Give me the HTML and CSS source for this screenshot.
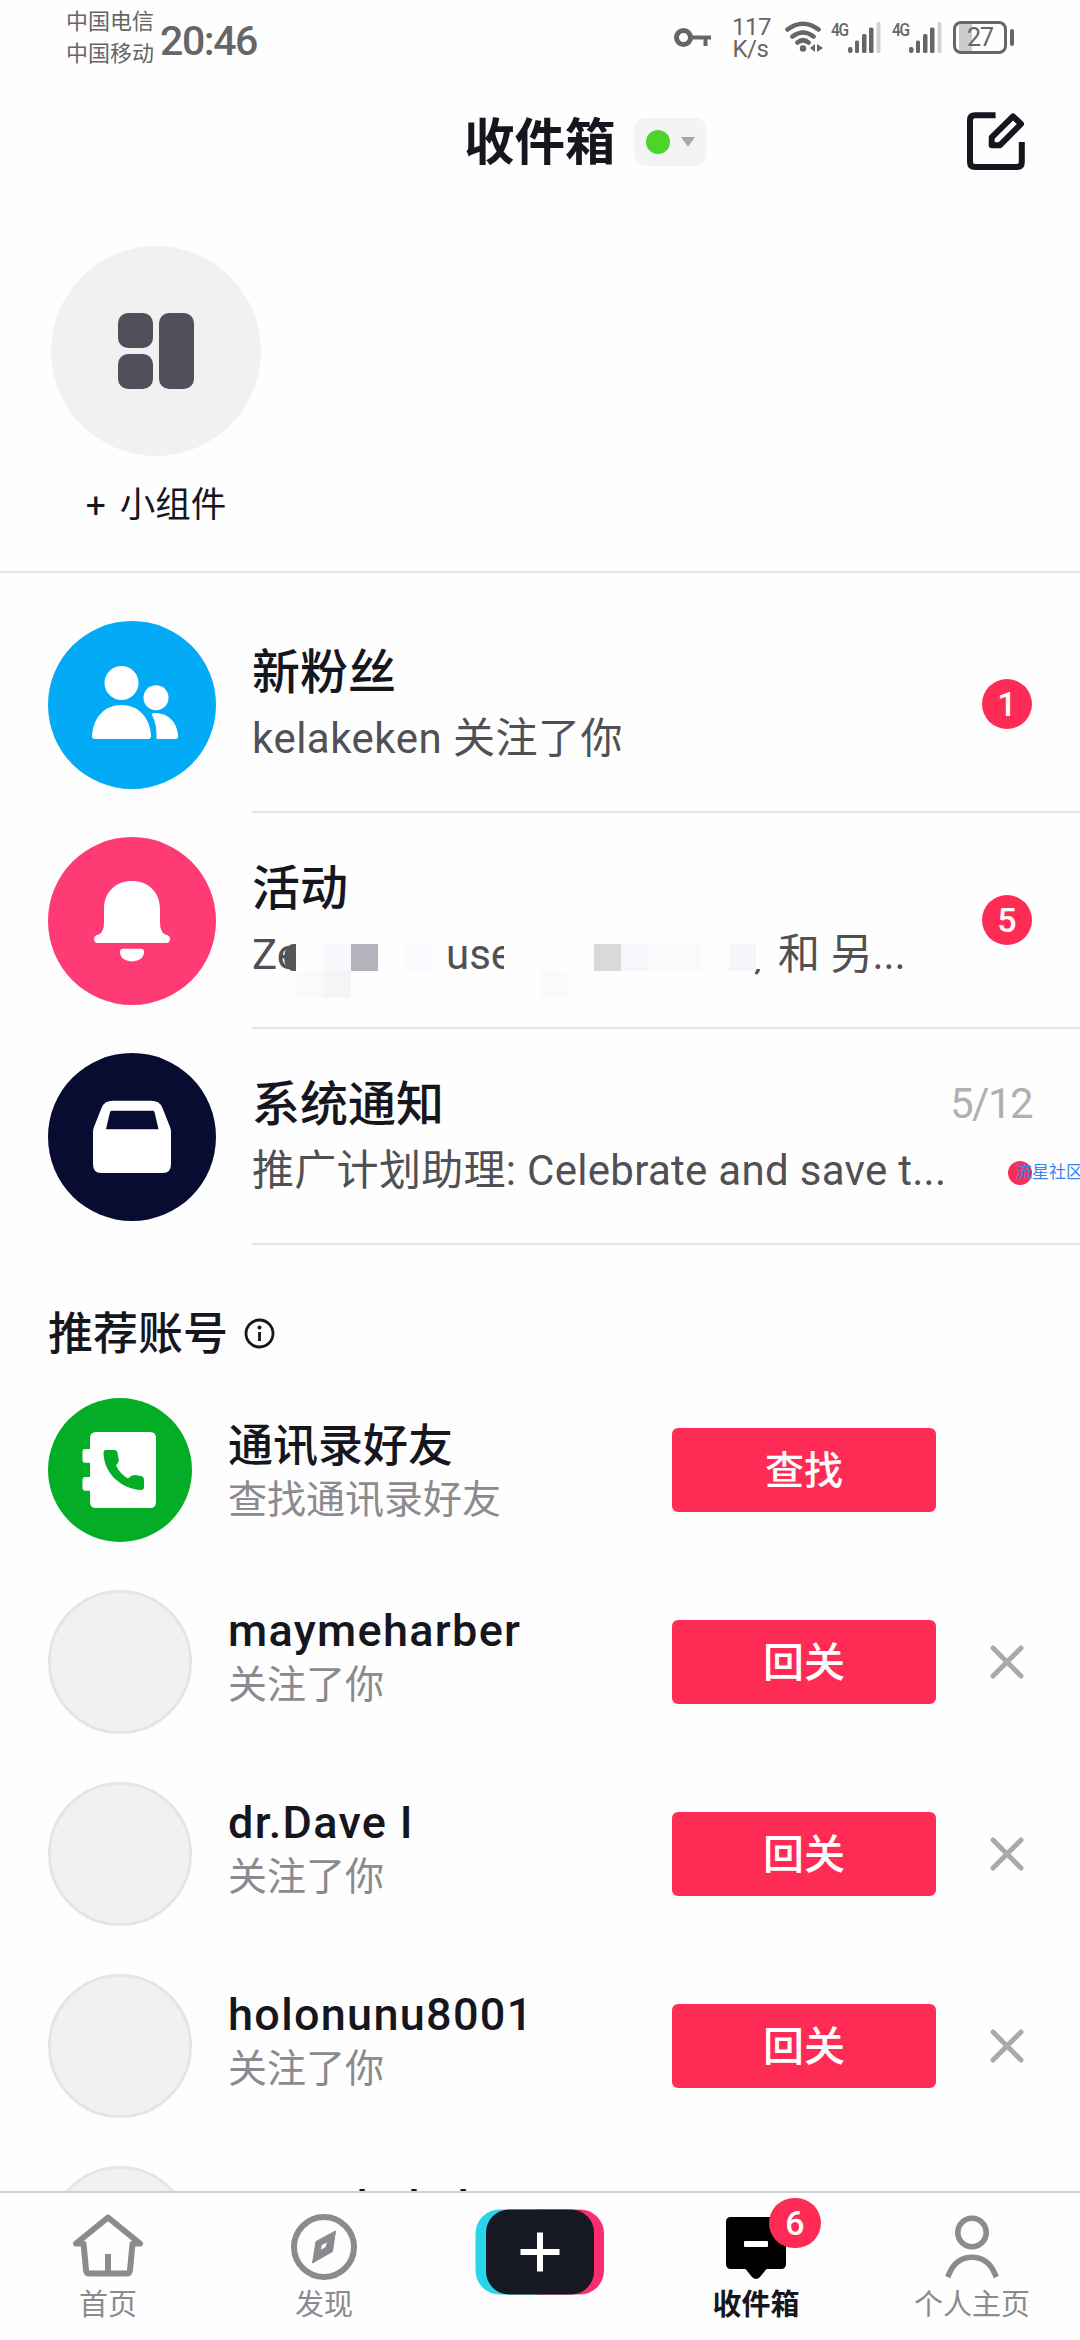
FILE: index.html
```html
<!DOCTYPE html>
<html lang="zh-CN">
<head>
<meta charset="utf-8">
<title>收件箱</title>
<link rel="stylesheet" href="styles.css">
</head>
<body>
<div class="app">
  <div class="status">
    <div class="carriers"><span>中国电信</span><span>中国移动</span></div>
    <div class="clock">20:46</div>
    <div class="status-right">
      <svg class="key" width="38" height="20" viewBox="0 0 38 20" fill="none" stroke="#666" stroke-width="5"><circle cx="9.5" cy="9.500" r="7"/><path d="M17 9.500H37M31.500 10V18" stroke-width="4"/></svg>
      <div class="speed"><span>117</span><span>K/s</span></div>
      <svg class="wifi" width="38" height="32" viewBox="0 0 38 32" fill="none" stroke="#666" stroke-width="4.600" stroke-linecap="round"><path d="M2.500 8.500Q18-3 33.500 8.500M7.500 15.500Q18 7.500 28.500 15.500M12.500 21.500Q18 17 23.500 21.500"/><circle cx="18" cy="27.500" r="3.200" fill="#666" stroke="none"/><path d="M25 27l5-4v8zM38 27l-6 4v-8z" fill="#666" stroke="none"/></svg>
      <div class="signal"><span>4G</span><svg width="33" height="31" viewBox="0 0 33 31" fill="#666"><rect y="25" width="4.500" height="6" rx="2"/><rect x="7" y="18.500" width="4" height="12.500" rx="1.500"/><rect x="14" y="12" width="4.500" height="19" rx="1.500"/><rect x="21" y="5.500" width="4.500" height="25.500" rx="1.500"/><rect x="28.500" y="0" width="4" height="31" rx="1.500" fill="#d2d2d2"/></svg></div>
      <div class="signal"><span>4G</span><svg width="33" height="31" viewBox="0 0 33 31" fill="#666"><rect y="25" width="4.500" height="6" rx="2"/><rect x="7" y="18.500" width="4" height="12.500" rx="1.500"/><rect x="14" y="12" width="4.500" height="19" rx="1.500"/><rect x="21" y="5.500" width="4.500" height="25.500" rx="1.500"/><rect x="28.500" y="0" width="4" height="31" rx="1.500" fill="#d2d2d2"/></svg></div>
      <div class="battery"><div class="cell">27</div><div class="tip"></div></div>
    </div>
  </div>

  <header class="header">
    <h1>收件箱</h1>
    <div class="presence"><span class="online"></span><span class="caret"></span></div>
    <svg class="edit" width="58" height="59" viewBox="0 0 58 59" fill="none" stroke="#16161f" stroke-width="6" stroke-linejoin="round"><path d="M28.600 3.300H8Q3 3.300 3 8.300V50Q3 55 8 55H50Q54.800 55 54.800 50V30"/><path d="M24.700 25.300L46 4.300L54 12L33 33.200H24.700Z"/></svg>
  </header>

  <section class="widgets">
    <div class="widget">
      <div class="widget-circle"><i></i><i class="tall"></i><i></i></div>
      <span>+ 小组件</span>
    </div>
  </section>

  <main class="content">
    <div class="notice">
      <svg class="notice-icon" viewBox="0 0 168 168"><circle cx="84" cy="84" r="84" fill="#03aaf5"/><g fill="#fff"><circle cx="73.500" cy="62" r="17"/><path d="M44 115C45 96 57 84 73.500 84S102 96 103 115Q103 118 100 118H47Q44 118 44 115Z"/><circle cx="108" cy="76.700" r="12.500"/><path d="M104 94Q103 92 107 92C120 92 129 101 130 114Q131 118 127 118H108.500Q109 103 104 94Z"/></g></svg>
      <div class="notice-body">
        <div class="notice-text"><h2>新粉丝</h2><p class="follow">kelakeken 关注了你</p></div>
        <span class="count">1</span>
      </div>
    </div>
    <div class="notice">
      <svg class="notice-icon" viewBox="0 0 168 168"><circle cx="84" cy="84" r="84" fill="#ff3b76"/><g fill="#fff"><path d="M56 72C56 54 69 44 84 44S112 54 112 72V85Q112 95 117 97.500Q122 98 122 102Q122 106 118 106H50Q46 106 46 102Q46 98 51 97.500Q56 95 56 85Z"/><path d="M75 111.700H93Q96 111.700 96 115C96 121 90 124.500 84 124.500S72 121 72 115Q72 111.700 75 111.700Z"/></g></svg>
      <div class="notice-body">
        <div class="notice-text"><h2>活动</h2>
          <p class="masked"><span class="m1">Zeo</span><span class="m2">use</span><span class="m3">,</span><span class="m4">和 另...</span>
            <i class="b dark"></i><i class="b b1"></i><i class="b b2"></i><i class="b b3"></i><i class="b b4"></i><i class="b b5"></i><i class="b b6"></i><i class="b b7"></i><i class="b b8"></i><i class="b b9"></i><i class="b b10"></i></p></div>
        <span class="count">5</span>
      </div>
    </div>
    <div class="notice">
      <svg class="notice-icon" viewBox="0 0 168 168"><circle cx="84" cy="84" r="84" fill="#080c31"/><path fill="#fff" d="M65 47.700H103Q112 47.700 114.500 55L122 74Q123 76 123 80V111Q123 120 115 120H53Q45 120 45 111V80Q45 76 46 74L53.500 55Q56 47.700 65 47.700Z"/><path fill="#080c31" d="M64 57.700H104.500Q106 57.700 106.500 59L110.500 76.300H58L62 59Q62.500 57.700 64 57.700Z"/></svg>
      <div class="notice-body">
        <div class="notice-text"><h2>系统通知</h2><p class="promo">推广计划助理: Celebrate and save t...</p></div>
        <div class="meta"><time>5/12</time><span class="unread"></span><span class="mark">流星社区</span></div>
      </div>
    </div>

    <div class="section-title"><h3>推荐账号</h3><svg width="31" height="31" viewBox="0 0 31 31" fill="none" stroke="#16161f"><circle cx="15.500" cy="15.500" r="13.500" stroke-width="2.800"/><path d="M15.500 14V23" stroke-width="2.800"/><circle cx="15.500" cy="9.500" r="2" fill="#16161f" stroke="none"/></svg></div>

    <div class="person contact">
      <svg class="avatar-icon" viewBox="0 0 144 144"><circle cx="72" cy="72" r="72" fill="#03ae26"/><path fill="#fff" d="M48 34H102Q108 34 108 40V104Q108 110 102 110H48Q42 110 42 104V92.700H37Q34.500 92.700 34.500 90V82Q34.500 79 37 79H42V64.700H37Q34.500 64.700 34.500 62V54Q34.500 51 37 51H42V40Q42 34 48 34Z"/><path fill="#03ae26" d="M58 52H66Q69 52 69.500 55L70.800 62Q71 64 68 67.500Q72 76 80 80.500L82.500 78.500Q84 77 87 77L93 78Q96 78.500 96 82V89Q96 92 93 92C74 91 56 76 55.500 55Q55.500 52 58 52Z"/></svg>
      <div class="person-text"><h4>通讯录好友</h4><p>查找通讯录好友</p></div>
      <button class="find">查找</button>
    </div>
    <div class="person">
      <div class="avatar"></div>
      <div class="person-text"><h4>maymeharber</h4><p>关注了你</p></div>
      <button>回关</button>
      <svg class="close" viewBox="0 0 34 34"><path d="M3 3L31 31M31 3L3 31"/></svg>
    </div>
    <div class="person">
      <div class="avatar"></div>
      <div class="person-text"><h4>dr.Dave I</h4><p>关注了你</p></div>
      <button>回关</button>
      <svg class="close" viewBox="0 0 34 34"><path d="M3 3L31 31M31 3L3 31"/></svg>
    </div>
    <div class="person">
      <div class="avatar"></div>
      <div class="person-text"><h4>holonunu8001</h4><p>关注了你</p></div>
      <button>回关</button>
      <svg class="close" viewBox="0 0 34 34"><path d="M3 3L31 31M31 3L3 31"/></svg>
    </div>
    <div class="person">
      <div class="avatar"></div>
      <div class="person-text"><h4>eortathaksk</h4></div>
    </div>
  </main>

  <nav class="nav">
    <a class="tab"><svg viewBox="0 0 78 78" fill="none" stroke="#8a8a8f" stroke-width="6" stroke-linejoin="round" stroke-linecap="round"><path d="M13 35.500H7L39 9.500L71 35.500H65"/><path d="M14.600 36L17 62Q17.500 65.500 20 65.500H58Q60.500 65.500 61 62L63.500 36"/><path d="M39 46V63" stroke-linecap="butt"/></svg><span>首页</span></a>
    <a class="tab"><svg viewBox="0 0 78 78" fill="none" stroke="#8a8a8f"><circle cx="39" cy="39" r="30" stroke-width="6"/><path fill="#8a8a8f" fill-rule="evenodd" stroke="#8a8a8f" stroke-linejoin="round" d="M50.500 23L47.500 43.500L27.500 55L31 33.500ZM42.500 33.700L36.300 36.700L35.300 42.700L41 39.300Z"/></svg><span>发现</span></a>
    <a class="tab create"><svg width="130" height="86" viewBox="0 0 130 86"><rect x="0.500" y="0.500" width="90" height="85" rx="24" fill="#29d5ea"/><rect x="39" y="0.500" width="90" height="85" rx="24" fill="#fb2d72"/><rect x="11" y="0.500" width="108" height="85" rx="23" fill="#161823"/><path d="M45.500 43H84.500M65 23.500V62.500" stroke="#fff" stroke-width="6"/></svg></a>
    <a class="tab active"><svg viewBox="0 0 78 78"><path fill="#000" d="M14 9H64Q69 9 69 14V56Q69 61 64 61H49.500L43 69Q39 73 35 69L28.500 61H14Q9 61 9 56V14Q9 9 14 9Z"/><rect x="27" y="33" width="24" height="6" rx="1" fill="#fff"/></svg><span>收件箱</span><b class="nav-count">6</b></a>
    <a class="tab"><svg viewBox="0 0 78 78" fill="none" stroke="#8a8a8f" stroke-width="5.600" stroke-linecap="square"><circle cx="39" cy="24.500" r="14.200"/><path d="M15.800 66.500C21 53.500 29 49.200 39 49.200S57 53.500 62.200 66.500"/></svg><span>个人主页</span></a>
  </nav>
</div>
</body>
</html>
```
FILE: styles.css
```css
* { box-sizing: border-box; margin: 0; padding: 0; }
body {
  width: 1080px;
  height: 2340px;
  overflow: hidden;
  background: #fefefe;
  color: #16161f;
  font-family: Roboto, "Noto Sans CJK SC", sans-serif;
}
svg { display: block; flex: none; }
.app { display: flex; flex-direction: column; height: 2340px; overflow: hidden; }

.status { display: flex; height: 78px; padding: 0 66px; color: #666; flex: none; }
.carriers { display: flex; flex-direction: column; padding-top: 6px; width: 94px; font-size: 22px; line-height: 32px; }
.clock { padding-top: 2px; font-size: 41px; line-height: 78px; letter-spacing: -1.4px; font-weight: 500; }
.status-right { display: flex; margin-left: auto; align-items: flex-start; }
.key { margin-top: 28px; }
.speed { display: flex; flex-direction: column; width: 37px; margin: 16px 16px 0 20px; font-size: 24px; line-height: 22px; text-align: center; letter-spacing: -0.5px; }
.wifi { margin: 21px 8px 0 0; }
.signal { display: flex; width: 50px; margin: 22px 11px 0 0; }
.signal span { width: 17px; font: 500 18px/16px Roboto, sans-serif; letter-spacing: -1.5px; transform: scaleX(0.86); transform-origin: left; white-space: nowrap; height: 16px; }
.battery { display: flex; align-items: center; gap: 3px; margin-top: 21px; width: 61px; }
.cell { width: 54px; height: 33px; border: 3px solid #666; border-radius: 8px; font-size: 25px; line-height: 28px; text-align: center; letter-spacing: -1px; background: linear-gradient(90deg, transparent 3px, #ccc 3px, #ccc 16px, transparent 16px); background-clip: padding-box; }
.tip { width: 4px; height: 17px; border-radius: 2px; background: #666; }

.header { display: flex; height: 126px; padding: 0 55px 0 464px; align-items: center; flex: none; }
.header h1 { font-size: 50.5px; line-height: 60px; font-weight: 700; width: 170px; white-space: nowrap; padding-top: 4px; }
.presence { display: flex; align-items: center; gap: 11px; width: 72px; height: 48px; margin-top: 1px; padding-left: 12px; border-radius: 11px; background: #f4f4f4; }
.online { width: 24px; height: 24px; border-radius: 50%; background: #4bd52a; }
.caret { border: 7px solid transparent; border-top: 10px solid #a8a8a8; border-bottom: 0; }
.edit { margin-left: auto; }

.widgets { height: 369px; padding: 42px 51px 0; border-bottom: 2px solid #e5e5e5; flex: none; }
.widget { width: 210px; display: flex; flex-direction: column; align-items: center; }
.widget-circle { width: 210px; height: 210px; border-radius: 50%; background: #f1f1f1; display: grid; grid-template-columns: 35px 35px; grid-template-rows: 35px 35px; gap: 6px; place-content: center; }
.widget-circle i { background: #4f5059; border-radius: 10px; }
.widget-circle .tall { grid-row: 1 / 3; grid-column: 2; }
.widget span { margin-top: 28px; font-size: 35.5px; line-height: 42px; word-spacing: 5px; }

.content { flex: 1; min-height: 0; overflow: hidden; padding-top: 24px; }
.notice { display: flex; height: 216px; padding-left: 48px; align-items: center; }
.notice-icon { width: 168px; height: 168px; }
.notice-body { flex: 1; height: 216px; margin-left: 36px; display: flex; border-bottom: 2px solid #e5e5e5; padding-right: 48px; align-items: center; position: relative; }
.notice-text { flex: 1; height: 216px; padding-top: 47px; }
.notice h2 { font-size: 48px; line-height: 60px; font-weight: 500; }
.notice p { margin-top: 5px; font-size: 42px; line-height: 62px; color: #505055; white-space: nowrap; }
.notice .follow { letter-spacing: 0.5px; }
.count { width: 50px; height: 50px; border-radius: 50%; background: #fe2c55; color: #fff; font-size: 34px; line-height: 51px; text-align: center; font-weight: 500; }
.notice .promo { letter-spacing: 0.3px; width: 720px; }
.meta { position: absolute; right: 0; top: 45px; width: 130px; }
.meta time { display: block; font-size: 42px; line-height: 60px; letter-spacing: -1.5px; color: #b0b0b4; }
.unread { position: absolute; left: 58px; top: 87px; width: 24px; height: 24px; border-radius: 50%; background: #fe2c55; }
.mark { position: absolute; left: 65px; top: 86px; width: 65px; overflow: hidden; white-space: nowrap; font-size: 17px; line-height: 24px; color: #3487ee; }

.notice .masked { display: flex; position: relative; }
.masked span { display: block; overflow: hidden; flex: none; }
.m1 { width: 44px; }
.m2 { margin-left: 150px; width: 58px; }
.m3 { margin-left: 250px; width: 12px; clip-path: inset(45px 0 0 0); }
.masked .m4 { margin-left: 12px; }
.b { position: absolute; top: 17px; height: 27px; width: 27px; }
.dark { left: 32px; width: 12px; border-radius: 10px 0 0 10px / 14px 0 0 14px; background: #555; }
.b1 { left: 72px; background: #f8f8fd; }
.b2 { left: 99px; background: #b4b3bc; }
.b3 { left: 153px; background: #f9f9fe; }
.b4 { left: 45px; top: 44px; background: #fafafa; }
.b5 { left: 72px; top: 44px; background: #f5f5f5; }
.b6 { left: 288px; top: 44px; background: #fafafa; }
.b7 { left: 342px; background: #d9d9d9; }
.b8 { left: 369px; background: #f6f6fb; }
.b9 { left: 396px; width: 53px; background: #fafafd; }
.b10 { left: 477px; background: #f5f5fb; }

.masked i { margin-top: 3px; }

.section-title { display: flex; height: 153px; padding: 24px 48px 0; align-items: center; gap: 16px; }
.section-title h3 { font-size: 45px; line-height: 60px; font-weight: 500; padding-top: 3px; }

.person { display: flex; height: 192px; padding: 0 48px; align-items: flex-start; }
.avatar, .avatar-icon { width: 144px; height: 144px; flex: none; }
.avatar { border-radius: 50%; border: 3px solid #e5e5e5; background: #f1f1f1; }
.person-text { width: 444px; margin-left: 36px; padding-top: 14px; white-space: nowrap; }
.person h4 { font-size: 45px; line-height: 54px; font-weight: 500; letter-spacing: 1.3px; }
.person p { font-size: 39px; line-height: 54px; color: #8a8a8f; }
.contact .person-text { padding-top: 22px; }
.contact h4 { letter-spacing: 0; }
.contact p { margin-top: -1px; }
.person button { width: 264px; height: 84px; margin-top: 30px; border: 0; border-radius: 6px; background: #fe2c55; color: #fff; font: 500 41px/86px Roboto, "Noto Sans CJK SC", sans-serif; }
.person .find { font-size: 39px; }
.close { width: 34px; height: 34px; margin: 55px 0 0 54px; }
.close path { stroke: #a9a9ad; stroke-width: 5; stroke-linecap: round; }

.nav { display: grid; grid-template-columns: repeat(5, 1fr); height: 149px; border-top: 2px solid #d0d0d0; flex: none; background: #fefefe; }
.tab { display: flex; flex-direction: column; align-items: center; position: relative; padding-top: 15px; font-size: 29px; color: #8a8a8f; }
.tab svg { width: 78px; height: 78px; }
.tab span { line-height: 38px; }
.create.tab svg { width: 130px; height: 86px; margin-top: 1px; }
.active { color: #16161f; font-weight: 700; }
.nav-count { position: absolute; left: 121px; top: 5px; width: 52px; height: 50px; border-radius: 25px; background: #fe2c55; color: #fff; font-size: 34px; line-height: 51px; text-align: center; font-weight: 500; }
```
